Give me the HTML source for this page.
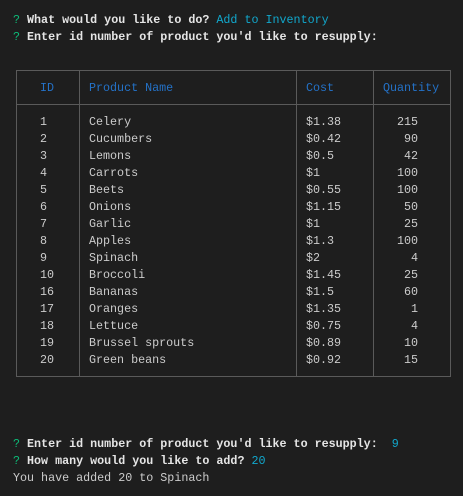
<!DOCTYPE html><html><head><style>
body{margin:0;background:#1e1e1e;width:463px;height:496px;overflow:hidden;position:relative;font-family:"Liberation Mono","DejaVu Sans Mono",monospace;font-size:11.7px;color:#cccccc}
.l{position:absolute;white-space:pre;line-height:17px}
.g{color:#0dbc79}.c{color:#11a8cd}.b{font-weight:bold;color:#e5e5e5}.h{color:#2472c8}
.box{position:absolute;left:16px;top:70px;width:433px;height:305px;border:1px solid #5a5a5a}
.v{position:absolute;top:70px;width:1px;height:307px;background:#5a5a5a}
</style></head><body>
<div class="l" style="left:13px;top:12px"><span class="g">? </span><span class="b">What would you like to do? </span><span class="c">Add to Inventory</span></div>
<div class="l" style="left:13px;top:29px"><span class="g">? </span><span class="b">Enter id number of product you'd like to resupply:</span></div>
<div class="box"></div>
<div class="v" style="left:79px"></div><div class="v" style="left:296px"></div><div class="v" style="left:373px"></div>
<div style="position:absolute;left:16px;top:104px;width:435px;height:1px;background:#5a5a5a"></div>
<div class="l h" style="left:40px;top:80px">ID</div>
<div class="l h" style="left:89px;top:80px">Product Name</div>
<div class="l h" style="left:306px;top:80px">Cost</div>
<div class="l h" style="left:383px;top:80px">Quantity</div>
<div class="l" style="left:40px;top:114px">1
2
3
4
5
6
7
8
9
10
16
17
18
19
20</div>
<div class="l" style="left:89px;top:114px">Celery
Cucumbers
Lemons
Carrots
Beets
Onions
Garlic
Apples
Spinach
Broccoli
Bananas
Oranges
Lettuce
Brussel sprouts
Green beans</div>
<div class="l" style="left:306px;top:114px">$1.38
$0.42
$0.5
$1
$0.55
$1.15
$1
$1.3
$2
$1.45
$1.5
$1.35
$0.75
$0.89
$0.92</div>
<div class="l" style="left:383px;top:114px">  215
   90
   42
  100
  100
   50
   25
  100
    4
   25
   60
    1
    4
   10
   15</div>
<div class="l" style="left:13px;top:436px"><span class="g">? </span><span class="b">Enter id number of product you'd like to resupply:  </span><span class="c">9</span></div>
<div class="l" style="left:13px;top:453px"><span class="g">? </span><span class="b">How many would you like to add? </span><span class="c">20</span></div>
<div class="l" style="left:13px;top:470px">You have added 20 to Spinach</div>
</body></html>
